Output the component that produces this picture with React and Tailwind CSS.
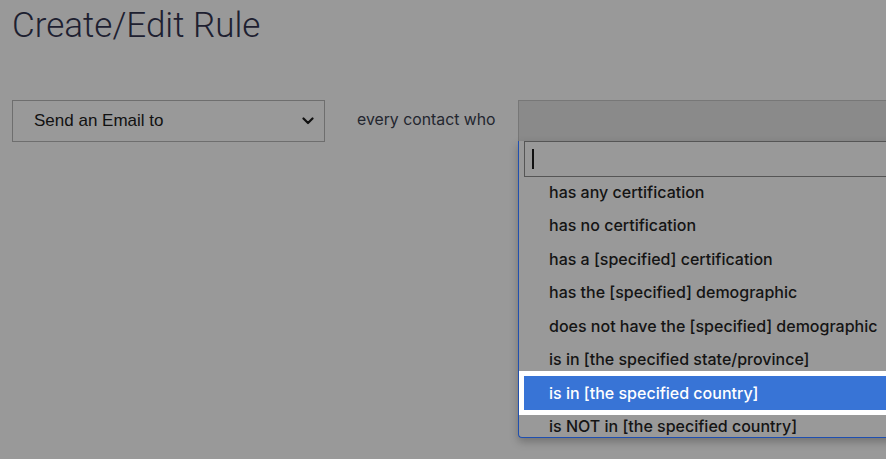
import React from "react";

const options = [
  "has any certification",
  "has no certification",
  "has a [specified] certification",
  "has the [specified] demographic",
  "does not have the [specified] demographic",
  "is in [the specified state/province]",
  "is in [the specified country]",
  "is NOT in [the specified country]",
];

function ChevronDown() {
  return (
    <svg width="12" height="8" viewBox="0 0 12 8" fill="none">
      <path d="M1.5 1.5 6 6l4.5-4.5" stroke="#111" strokeWidth="2.2" strokeLinecap="round" strokeLinejoin="round" />
    </svg>
  );
}

export default function App() {
  const active = 6;

  return (
    <div className="relative h-[459px] w-full overflow-hidden bg-[#999999] font-['Inter',sans-serif]">
      <h1 className="pl-[12px] pt-[6px] font-['Roboto',sans-serif] text-[35px] font-light leading-[40px] text-[#1d2030]">
        Create/Edit Rule
      </h1>

      <div className="mt-[54px] flex items-start">
        <div className="ml-[12px] flex h-[42px] w-[313px] shrink-0 items-center justify-between border border-[#6e6e6e] pl-[21px] pr-[10px]">
          <span className="font-['Liberation_Sans',sans-serif] text-[17px] text-[#111]">Send an Email to</span>
          <ChevronDown />
        </div>

        <div className="ml-[32px] flex h-[40px] w-[139px] shrink-0 items-center whitespace-nowrap text-[15.8px] text-[#23262f]">
          every contact who
        </div>

        <div className="relative ml-[22px] flex-1">
          <div className="h-[41px] border-l border-t border-[#777] bg-[#8a8a8a]" />

          <div className="absolute left-0 right-[-20px] top-[41px] h-[297px] overflow-hidden rounded-bl-[4px] border-b border-l border-[#1f4fb0] bg-[#999999] shadow-[0_4px_8px_rgba(0,0,0,0.25)]">
            <div className="pl-[5px]">
              <div className="flex h-[36px] items-center border border-[#555] pl-[7px]">
                <span className="h-[20px] w-[2px] bg-[#111]" />
              </div>
              <ul className="-mt-[2px]">
                {options.map((opt, i) => (
                  <li
                    key={opt}
                    className={
                      i === active
                        ? "flex h-[33.5px] items-center whitespace-nowrap bg-[#3874d6] pl-[25px] text-[16px] font-medium text-white shadow-[0_0_0_5px_white]"
                        : "flex h-[33.5px] items-center whitespace-nowrap pl-[25px] text-[16px] font-medium text-[#141414]"
                    }
                  >
                    {opt}
                  </li>
                ))}
              </ul>
            </div>
          </div>
        </div>
      </div>
    </div>
  );
}
